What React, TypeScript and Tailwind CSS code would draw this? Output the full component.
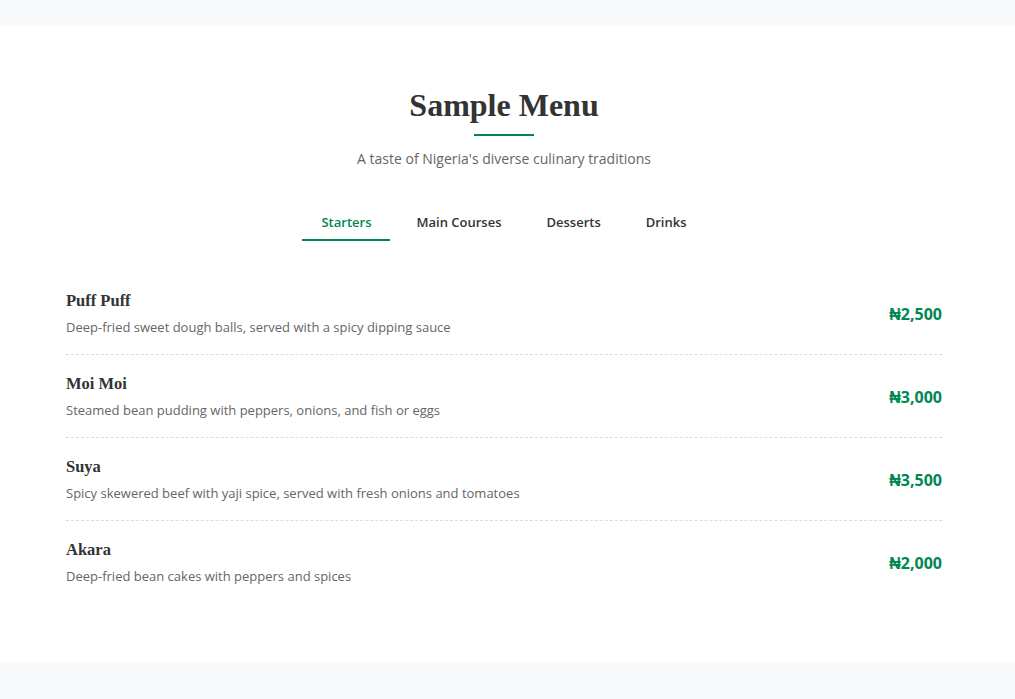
import React, { useState } from "react";

const items = [
  { name: "Puff Puff", desc: "Deep-fried sweet dough balls, served with a spicy dipping sauce", price: "₦2,500" },
  { name: "Moi Moi", desc: "Steamed bean pudding with peppers, onions, and fish or eggs", price: "₦3,000" },
  { name: "Suya", desc: "Spicy skewered beef with yaji spice, served with fresh onions and tomatoes", price: "₦3,500" },
  { name: "Akara", desc: "Deep-fried bean cakes with peppers and spices", price: "₦2,000" },
];

const tabs = ["Starters", "Main Courses", "Desserts", "Drinks"];

export default function App() {
  const [active, setActive] = useState(0);
  const sans = { fontFamily: "'Open Sans', 'Liberation Sans', sans-serif" };
  const serif = { fontFamily: "'Liberation Serif', 'DejaVu Serif', serif" };
  return (
    <div className="min-h-[699px] bg-[#f8f9fa] pt-[26px]" style={sans}>
      <section className="bg-white pt-[59px] pb-[59px] pr-[7px]">
        <div className="mx-auto max-w-[876px]">
          <div className="flex flex-col items-center">
            <h2 className="text-[32px] font-bold leading-[40px] text-[#333333]" style={serif}>
              Sample Menu
            </h2>
            <div className="mt-[9px] h-[2px] w-[60px] bg-[#008751]" />
            <p className="mt-[13px] text-[14px] leading-[20px] text-[#666666]">
              A taste of Nigeria's diverse culinary traditions
            </p>
          </div>
          <div className="mt-[38px] flex justify-center gap-[7px]">
            {tabs.map((t, i) => (
              <button
                key={t}
                onClick={() => setActive(i)}
                className={
                  "px-[19px] pt-[5px] pb-[7px] text-[13px] font-semibold leading-[20px] border-b-2 " +
                  (i === active ? "text-[#008751] border-[#008751]" : "text-[#333333] border-transparent")
                }
              >
                {t}
              </button>
            ))}
          </div>
          <div className="mt-[31px]">
            {items.map((it, i) => (
              <div
                key={it.name}
                className={
                  "flex items-center justify-between pt-[18px] pb-[17px] " +
                  (i < items.length - 1 ? "border-b border-dashed border-[#dddddd]" : "")
                }
              >
                <div>
                  <h3 className="text-[16.5px] font-bold leading-[22px] text-[#333333]" style={serif}>
                    {it.name}
                  </h3>
                  <p className="mt-[5px] text-[13px] leading-[20px] text-[#666666]">{it.desc}</p>
                </div>
                <div className="text-[16px] font-bold text-[#008751]">{it.price}</div>
              </div>
            ))}
          </div>
        </div>
      </section>
    </div>
  );
}
